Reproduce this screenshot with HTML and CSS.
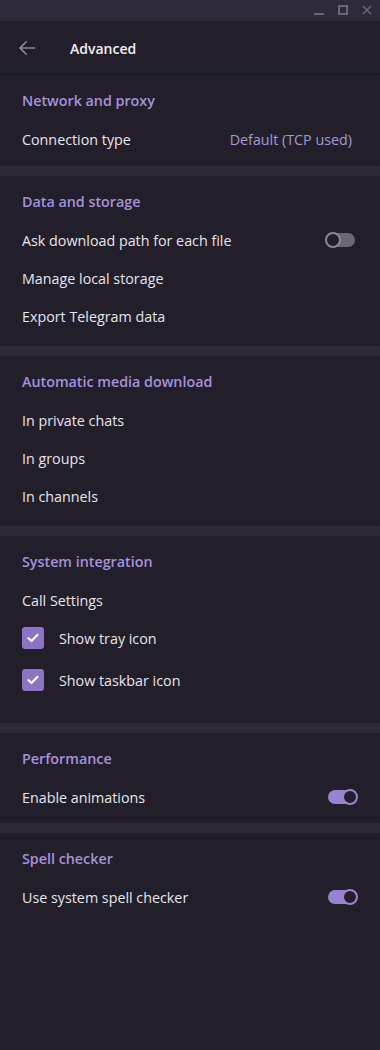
FILE: index.html
```html
<!DOCTYPE html>
<html>
<head>
<meta charset="utf-8">
<link rel="stylesheet" href="styles.css">
</head>
<body>
<div class="window">
  <div class="titlebar">
    <svg class="wc" width="10" height="10" viewBox="0 0 10 10"><path d="M0 9h10" stroke="#6b6579" stroke-width="2"/></svg>
    <svg class="wc" width="10" height="10" viewBox="0 0 10 10"><rect x="1" y="1" width="8" height="8" fill="none" stroke="#6b6579" stroke-width="2"/></svg>
    <svg class="wc" width="10" height="10" viewBox="0 0 10 10"><path d="M1 1L9 9M9 1L1 9" stroke="#6b6579" stroke-width="1.6"/></svg>
  </div>
  <div class="header">
    <svg class="back" width="18" height="16" viewBox="0 0 18 16"><path d="M17 8H2M8.5 1.5L2 8l6.5 6.5" fill="none" stroke="#8c8798" stroke-width="1.7"/></svg>
    <div class="htitle">Advanced</div>
  </div>

  <div class="section">
    <div class="stitle">Network and proxy</div>
    <div class="row"><span>Connection type</span><span class="value">Default (TCP used)</span></div>
  </div>
  <div class="sep"></div>

  <div class="section tall">
    <div class="stitle">Data and storage</div>
    <div class="row"><span>Ask download path for each file</span><span class="toggle off"><span class="knob"></span></span></div>
    <div class="row"><span>Manage local storage</span></div>
    <div class="row"><span>Export Telegram data</span></div>
  </div>
  <div class="sep"></div>

  <div class="section tall">
    <div class="stitle">Automatic media download</div>
    <div class="row"><span>In private chats</span></div>
    <div class="row"><span>In groups</span></div>
    <div class="row"><span>In channels</span></div>
  </div>
  <div class="sep"></div>

  <div class="section sys">
    <div class="stitle">System integration</div>
    <div class="row"><span>Call Settings</span></div>
    <div class="crow"><span class="check"><svg width="12" height="10" viewBox="0 0 12 10"><path d="M1.5 5.2L4.5 8L10.5 1.8" fill="none" stroke="#fff" stroke-width="2.2" stroke-linecap="round" stroke-linejoin="round"/></svg></span><span>Show tray icon</span></div>
    <div class="crow"><span class="check"><svg width="12" height="10" viewBox="0 0 12 10"><path d="M1.5 5.2L4.5 8L10.5 1.8" fill="none" stroke="#fff" stroke-width="2.2" stroke-linecap="round" stroke-linejoin="round"/></svg></span><span>Show taskbar icon</span></div>
  </div>
  <div class="sep"></div>

  <div class="section short">
    <div class="stitle">Performance</div>
    <div class="row"><span>Enable animations</span><span class="toggle on"><span class="knob"></span></span></div>
  </div>
  <div class="sep"></div>

  <div class="section">
    <div class="stitle">Spell checker</div>
    <div class="row"><span>Use system spell checker</span><span class="toggle on"><span class="knob"></span></span></div>
  </div>
</div>
</body>
</html>
```

FILE: styles.css
```css
html, body {
  margin: 0;
  padding: 0;
  background: #221f2a;
}
.window {
  width: 380px;
  height: 1050px;
  background: #221f2a;
  font-family: "Open Sans", "Noto Sans", sans-serif;
  font-size: 14.3px;
  color: #e6e4ec;
  overflow: hidden;
}
.titlebar {
  height: 21px;
  background: #2f2a39;
  display: flex;
  justify-content: flex-end;
  align-items: flex-start;
  gap: 14px;
  padding: 5px 8px 0 0;
  box-sizing: border-box;
}
.wc { display: block; }
.header {
  height: 54px;
  box-sizing: border-box;
  border-bottom: 1px solid #17151d;
  display: flex;
  align-items: center;
  padding: 1px 0 0 18px;
}
.back { display: block; margin-right: 34px; }
.htitle {
  font-weight: 600;
  font-size: 14px;
  color: #f1eff5;
}
.section {
  padding: 7px 0 8px;
}
.section.tall { padding-bottom: 11px; }
.section.sys { padding-bottom: 24px; }
.section.short { padding-bottom: 7px; }
.stitle {
  height: 38px;
  line-height: 38px;
  padding-left: 22px;
  font-weight: 600;
  color: #a891dc;
}
.row {
  height: 38px;
  display: flex;
  align-items: center;
  justify-content: space-between;
  padding: 0 23px 0 22px;
  box-sizing: border-box;
}
.value { color: #a798d8; padding-right: 5px; }
.crow {
  height: 38px;
  display: flex;
  align-items: center;
  padding-left: 22px;
  gap: 15px;
}
.crow + .crow { margin-top: 4px; }
.check {
  width: 22px;
  height: 22px;
  border-radius: 3px;
  background: #8c73c4;
  display: flex;
  align-items: center;
  justify-content: center;
}
.check svg { display: block; }
.sep {
  height: 10px;
  background: #2d2936;
}
.toggle {
  position: relative;
  width: 29px;
  height: 14px;
  border-radius: 7px;
}
.toggle.off { background: #6d6878; margin-right: 2px; }
.toggle.on { background: #9983d1; }
.knob {
  position: absolute;
  top: -1px;
  width: 12px;
  height: 12px;
  border-radius: 50%;
  background: #221f2a;
  border: 2px solid #8b8795;
}
.toggle.off .knob { left: -1px; }
.toggle.on .knob { right: -1px; border-color: #9983d1; }
```
